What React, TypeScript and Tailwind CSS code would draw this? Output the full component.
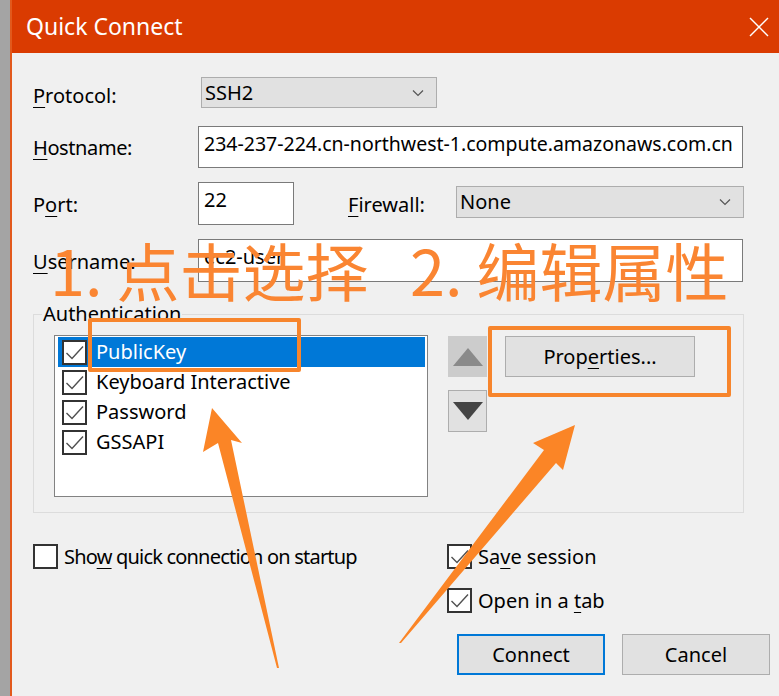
import React from 'react';

const ui = "font-['Noto_Sans',sans-serif] text-[20px] text-black";

function U({ children }: { children: React.ReactNode }) {
  return <span className="underline decoration-1 underline-offset-[4px]">{children}</span>;
}

function Check({ checked }: { checked: boolean }) {
  return (
    <div className="w-[25px] h-[25px] shrink-0 border-2 border-[#333333] bg-white flex items-center justify-center">
      {checked && (
        <svg width="21" height="21" viewBox="0 0 21 21">
          <polyline points="2.5,11 8,16.5 19,4.5" fill="none" stroke="#505050" strokeWidth="1.4" />
        </svg>
      )}
    </div>
  );
}

function Chevron() {
  return (
    <svg width="12" height="8" viewBox="0 0 12 8">
      <polyline points="1,1.5 6,6.5 11,1.5" fill="none" stroke="#555555" strokeWidth="1.2" />
    </svg>
  );
}

function Select({ value, className }: { value: string; className: string }) {
  return (
    <div className={`${className} flex items-center justify-between bg-[#e1e1e1] border border-[#adadad] pl-[3px] pr-[12px]`}>
      <span>{value}</span>
      <Chevron />
    </div>
  );
}

function Input({ value, className }: { value: string; className: string }) {
  return (
    <div className={`${className} bg-white border border-[#7a7a7a] pl-[5px] pt-[3px] leading-[28px] whitespace-nowrap overflow-hidden`}>
      {value}
    </div>
  );
}

const authItems = ['PublicKey', 'Keyboard Interactive', 'Password', 'GSSAPI'];

export default function App() {
  return (
    <div className={`relative w-[779px] h-[696px] overflow-hidden flex bg-[#f0f0f0] ${ui}`}>
      {/* window behind */}
      <div className="w-[10px] shrink-0 bg-[#a4a4a4]" />

      <div className="flex-1 flex flex-col border-l-2 border-[#e2591c] bg-[#f0f0f0]">
        {/* Title bar */}
        <div className="h-[53px] shrink-0 bg-[#da3b01] flex items-center justify-between pl-[14px] pr-[10px]">
          <span className="text-white text-[23px] leading-none pb-[1px]">Quick Connect</span>
          <svg width="20" height="20" viewBox="0 0 20 20">
            <line x1="1" y1="1" x2="19" y2="19" stroke="#ffffff" strokeWidth="1.5" />
            <line x1="19" y1="1" x2="1" y2="19" stroke="#ffffff" strokeWidth="1.5" />
          </svg>
        </div>

        <div className="flex flex-col pl-[21px] pt-[24px]">
          {/* Protocol */}
          <div className="flex items-center h-[31px]">
            <span className="w-[165px] mt-[6px]"><U>P</U>rotocol:</span>
            <Select value="SSH2" className="ml-[3px] w-[236px] h-[31px]" />
          </div>

          {/* Hostname */}
          <div className="flex items-center h-[42px] mt-[18px]">
            <span className="w-[165px] mt-[2px] tracking-[-0.4px]"><U>H</U>ostname:</span>
            <Input value="234-237-224.cn-northwest-1.compute.amazonaws.com.cn" className="w-[545px] h-[42px] text-[19.5px]" />
          </div>

          {/* Port / Firewall */}
          <div className="flex items-center h-[43px] mt-[14px]">
            <span className="w-[165px] mt-[2px]">P<U>o</U>rt:</span>
            <Input value="22" className="w-[96px] h-[43px]" />
            <span className="ml-[54px] w-[108px] mt-[2px]"><U>F</U>irewall:</span>
            <Select value="None" className="w-[288px] h-[32px] -mt-[3px]" />
          </div>

          {/* Username */}
          <div className="flex items-center h-[43px] mt-[14px]">
            <span className="w-[165px] mt-[2px]"><U>U</U>sername:</span>
            <Input value="ec2-user" className="w-[545px] h-[43px]" />
          </div>

          {/* Authentication group */}
          <fieldset className="mt-[22px] w-[711px] h-[209px] border border-[#dcdcdc]">
            <legend className="ml-[8px] px-[1px] leading-[20px]">Authentication</legend>
            <div className="flex items-start pl-[20px] pt-[11px]">
              <div className="w-[374px] h-[162px] bg-white border border-[#828282] pt-[1px] pl-[3px] pr-[2px]">
                {authItems.map((item, i) => (
                  <div
                    key={item}
                    className={`h-[30px] flex items-center pl-[4px] ${i === 0 ? 'bg-[#0078d7] text-white' : ''}`}
                  >
                    <Check checked />
                    <span className="ml-[9px] leading-none">{item}</span>
                  </div>
                ))}
              </div>

              <div className="ml-[20px] mt-[1px] flex flex-col">
                <div className="w-[39px] h-[41px] bg-[#cccccc] flex items-center justify-center">
                  <svg width="32" height="20" viewBox="0 0 32 20">
                    <polygon points="16,1 31,19 1,19" fill="#8a8a8a" />
                  </svg>
                </div>
                <div className="w-[39px] h-[42px] mt-[13px] bg-[#e1e1e1] border border-[#adadad] flex items-center justify-center">
                  <svg width="32" height="20" viewBox="0 0 32 20">
                    <polygon points="1,1 31,1 16,19" fill="#444444" />
                  </svg>
                </div>
              </div>

              <div className="ml-[18px] mt-[1px] w-[190px] h-[41px] bg-[#e1e1e1] border border-[#adadad] flex items-center justify-center">
                <span>Prop<U>e</U>rties...</span>
              </div>
            </div>
          </fieldset>

          {/* Options */}
          <div className="flex mt-[31px]">
            <div className="w-[414px] flex items-center h-[25px]">
              <Check checked={false} />
              <span className="ml-[6px] tracking-[-0.8px]">Sho<U>w</U> quick connection on startup</span>
            </div>
            <div className="flex flex-col">
              <div className="flex items-center h-[25px]">
                <Check checked />
                <span className="ml-[6px]">Sa<U>v</U>e session</span>
              </div>
              <div className="flex items-center h-[25px] mt-[19px]">
                <Check checked />
                <span className="ml-[6px]">Open in a <U>t</U>ab</span>
              </div>
              <div className="flex mt-[21px] ml-[10px] gap-[17px]">
                <div className="w-[148px] h-[41px] bg-[#e1e1e1] border-2 border-[#0078d7] flex items-center justify-center">
                  Connect
                </div>
                <div className="w-[148px] h-[41px] bg-[#e1e1e1] border border-[#adadad] flex items-center justify-center">
                  Cancel
                </div>
              </div>
            </div>
          </div>
        </div>
      </div>

      {/* Annotations over the dialog */}
      <div className="absolute left-[50px] top-[237px] text-[63px] leading-none text-[#fa8532] font-['Noto_Sans_CJK_SC',sans-serif] whitespace-nowrap pointer-events-none">
        1. 点击选择
      </div>
      <div className="absolute left-[410px] top-[237px] text-[63px] leading-none text-[#fa8532] font-['Noto_Sans_CJK_SC',sans-serif] whitespace-nowrap pointer-events-none">
        2. 编辑属性
      </div>
      <div className="absolute left-[88px] top-[318px] w-[213px] h-[54px] border-[4px] border-[#f7852c] rounded-[2px] pointer-events-none" />
      <div className="absolute left-[488px] top-[326px] w-[243px] h-[71px] border-[4px] border-[#f7852c] rounded-[2px] pointer-events-none" />
      <svg className="absolute inset-0 pointer-events-none" width="779" height="696" viewBox="0 0 779 696">
        <polygon points="212,408 242,443 231,440 279,668 277,668 218,443 203,452" fill="#fb8526" />
        <polygon points="575,425 563,470 556,463 401,643 399,643 544,450 533,443" fill="#fb8526" />
      </svg>
    </div>
  );
}
